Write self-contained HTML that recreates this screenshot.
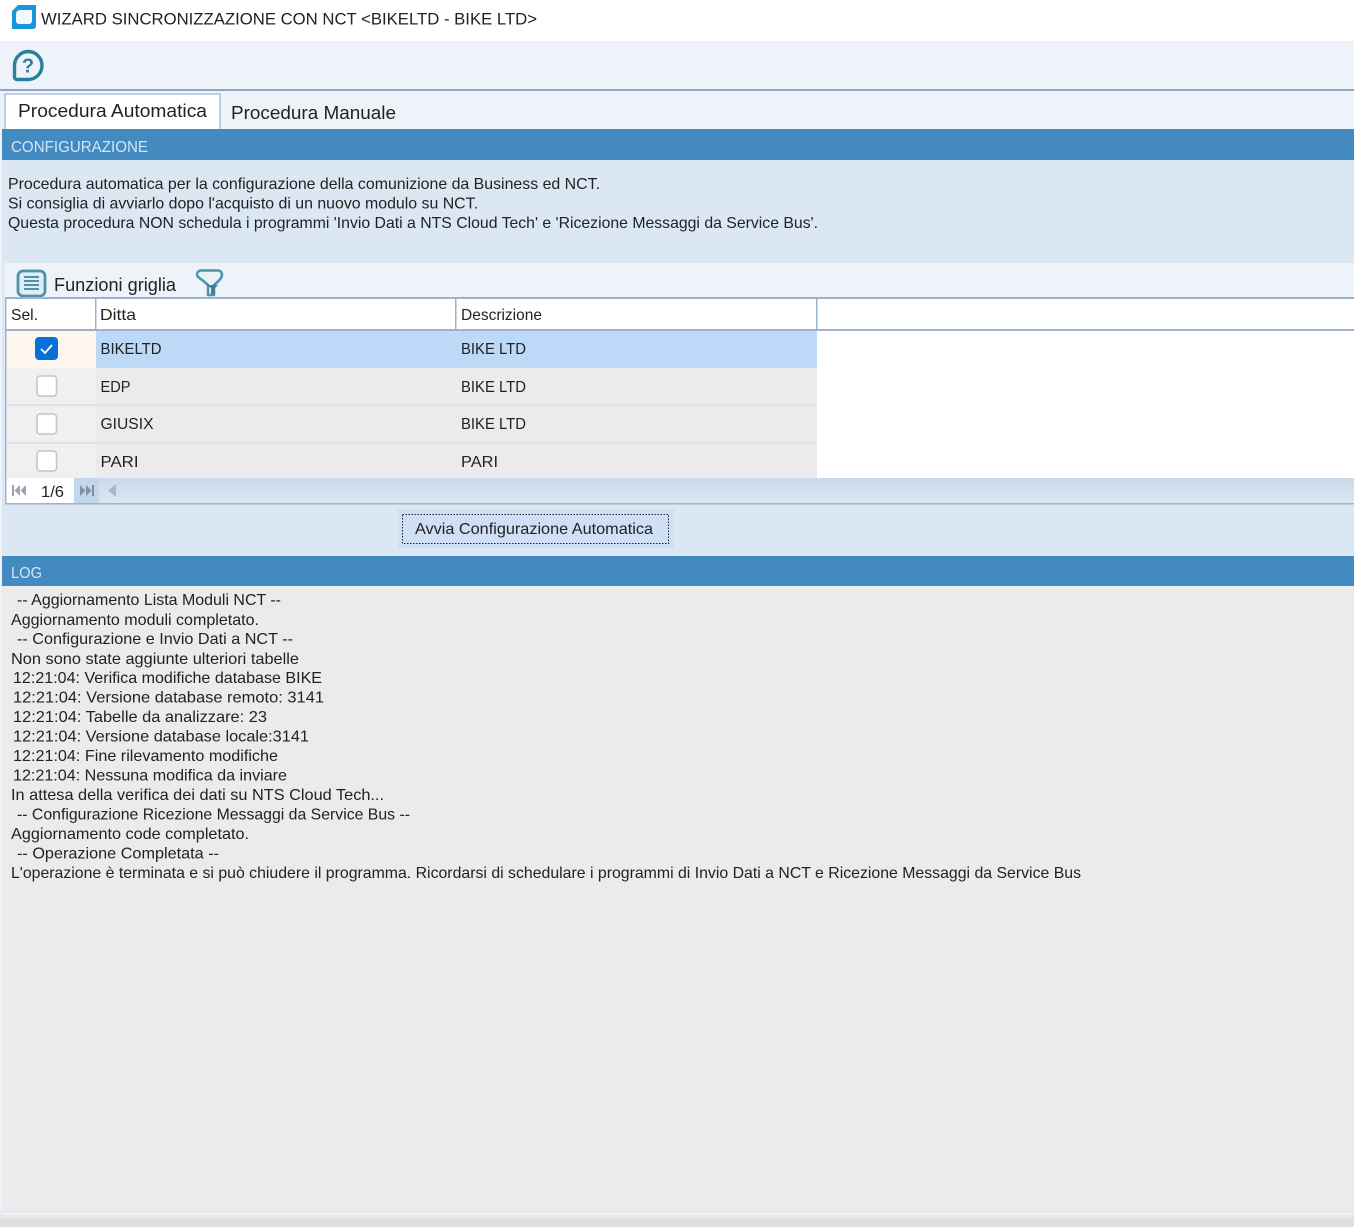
<!DOCTYPE html>
<html><head><meta charset="utf-8"><title>Wizard</title>
<style>
html,body{margin:0;padding:0;background:#fff;width:1354px;height:1227px;overflow:hidden}
svg{display:block;position:absolute;left:0;top:0}
text{font-family:"Liberation Sans",sans-serif;font-size:16px;fill:#222;white-space:pre}
.w{fill:#d5e4f2}
</style></head><body>
<svg width="1354" height="1227" viewBox="0 0 1354 1227" xmlns="http://www.w3.org/2000/svg">
<defs>
<linearGradient id="bar" x1="0" y1="0" x2="0" y2="1"><stop offset="0" stop-color="#c9d9ea"/><stop offset="1" stop-color="#dce7f2"/></linearGradient>
</defs>
<rect width="1354" height="1227" fill="#fff"/>
<!-- title -->
<path d="M18 5h18v21a3 3 0 0 1-3 3H12V11z" fill="#1b95dc"/>
<path d="M20 10h11a1 1 0 0 1 1 1v10a3 3 0 0 1-3 3H19a3 3 0 0 1-3-3V14a4 4 0 0 1 4-4z" fill="#f0f8fd"/>
<text x="41" y="24.500" textLength="496" lengthAdjust="spacingAndGlyphs" style="font-size:17px;fill:#222">WIZARD SINCRONIZZAZIONE CON NCT &lt;BIKELTD - BIKE LTD&gt;</text>
<!-- toolbar -->
<rect y="41" width="1354" height="48" fill="#eef2f9"/>
<rect y="89" width="1354" height="2" fill="#8ea6c4"/>
<path d="M28 51.500a14 14 0 0 1 0 28H17a2.500 2.500 0 0 1-2.500-2.500V65.500a14 14 0 0 1 13.500-14z" fill="none" stroke="#2a7f9f" stroke-width="3.400"/>
<text x="28" y="72.500" text-anchor="middle" style="font-size:20px;font-weight:bold;fill:#2a7f9f">?</text>
<!-- tabs -->
<rect y="91" width="1354" height="38" fill="#eef2f9"/>
<rect x="5" y="94" width="215" height="36" fill="#fff" stroke="#8ea6c4" stroke-width="1"/>
<text x="18" y="117" textLength="189" lengthAdjust="spacingAndGlyphs" style="font-size:18px">Procedura Automatica</text>
<text x="231" y="119" textLength="165" lengthAdjust="spacingAndGlyphs" style="font-size:18px">Procedura Manuale</text>
<!-- main bg -->
<rect x="2" y="129" width="1352" height="1088" fill="#dbe8f3"/>
<rect x="0" y="129" width="2" height="1088" fill="#eef2f9"/>
<rect x="2" y="129" width="1352" height="31" fill="#438ac1"/>
<text class="w" x="11" y="152" textLength="137" lengthAdjust="spacingAndGlyphs">CONFIGURAZIONE</text>
<text x="8" y="189" textLength="592" lengthAdjust="spacingAndGlyphs">Procedura automatica per la configurazione della comunizione da Business ed NCT.</text>
<text x="8" y="208.500" textLength="470" lengthAdjust="spacingAndGlyphs">Si consiglia di avviarlo dopo l'acquisto di un nuovo modulo su NCT.</text>
<text x="8" y="228" textLength="810" lengthAdjust="spacingAndGlyphs">Questa procedura NON schedula i programmi 'Invio Dati a NTS Cloud Tech' e 'Ricezione Messaggi da Service Bus'.</text>
<!-- grid toolbar -->
<rect x="4" y="263" width="1350" height="34" fill="#eef2f9"/>
<rect x="18" y="271" width="27" height="25" rx="5" fill="#e1edf6" stroke="#4d93ab" stroke-width="2.800"/>
<path d="M24 277h15M24 281h15M24 285h15M24 289h15" stroke="#4d93ab" stroke-width="2"/>
<text x="54" y="291" textLength="122" lengthAdjust="spacingAndGlyphs" style="font-size:18px">Funzioni griglia</text>
<path d="M201 270.500h17a4 4 0 0 1 4 4c0 3-2 5-4 7l-4 3.500v10h-6v-10l-4-3.500c-2-2-7-4-7-7a4 4 0 0 1 4-4z" fill="#eaf2f8" stroke="#4d93ab" stroke-width="2.500" stroke-linejoin="round"/>
<path d="M207 285h11l-3 3v6h-4v-6z" fill="#3f7f99"/>
<!-- grid -->
<rect x="5" y="297" width="1349" height="207" fill="#fff"/>
<rect x="5" y="297" width="1349" height="2" fill="#9db2cc"/>
<rect x="5" y="329" width="1349" height="2" fill="#9db2cc"/>
<rect x="5" y="297" width="1.500" height="207" fill="#9db2cc"/>
<rect x="95" y="298" width="1.500" height="32" fill="#9db2cc"/>
<rect x="455" y="298" width="1.500" height="32" fill="#9db2cc"/>
<rect x="816" y="298" width="1.500" height="32" fill="#9db2cc"/>
<text x="11" y="320" textLength="27" lengthAdjust="spacingAndGlyphs">Sel.</text>
<text x="100" y="320" textLength="36" lengthAdjust="spacingAndGlyphs">Ditta</text>
<text x="461" y="320" textLength="81" lengthAdjust="spacingAndGlyphs">Descrizione</text>
<!-- rows -->
<rect x="7" y="331" width="89" height="37" fill="#fdf6ec"/>
<rect x="96" y="331" width="721" height="37" fill="#bcd9f7"/>
<rect x="7" y="368" width="810" height="37" fill="#ebebeb"/>
<rect x="7" y="404.500" width="810" height="1.500" fill="#d5e0ee"/>
<rect x="7" y="406" width="810" height="36" fill="#ebebeb"/>
<rect x="7" y="442" width="810" height="1.500" fill="#d5e0ee"/>
<rect x="7" y="443.500" width="810" height="34.500" fill="#ebebeb"/>
<rect x="7" y="368" width="89" height="36.500" fill="#f0f0f0"/>
<rect x="7" y="406" width="89" height="36" fill="#f0f0f0"/>
<rect x="7" y="443.500" width="89" height="34.500" fill="#f0f0f0"/>
<rect x="35" y="337" width="23" height="23" rx="4" fill="#0a6fd6"/>
<path d="M41 349l4 4 7-8" fill="none" stroke="#fff" stroke-width="1.800"/>
<rect x="37" y="376" width="19.500" height="20" rx="3" fill="#fff" stroke="#c4c4c4" stroke-width="1.500"/>
<rect x="37" y="414" width="19.500" height="20" rx="3" fill="#fff" stroke="#c4c4c4" stroke-width="1.500"/>
<rect x="37" y="451" width="19.500" height="20" rx="3" fill="#fff" stroke="#c4c4c4" stroke-width="1.500"/>
<text x="100.500" y="354" textLength="61" lengthAdjust="spacingAndGlyphs">BIKELTD</text>
<text x="461" y="354" textLength="65" lengthAdjust="spacingAndGlyphs">BIKE LTD</text>
<text x="100.500" y="392" textLength="30" lengthAdjust="spacingAndGlyphs">EDP</text>
<text x="461" y="392" textLength="65" lengthAdjust="spacingAndGlyphs">BIKE LTD</text>
<text x="100.500" y="429" textLength="53" lengthAdjust="spacingAndGlyphs">GIUSIX</text>
<text x="461" y="429" textLength="65" lengthAdjust="spacingAndGlyphs">BIKE LTD</text>
<text x="100.500" y="467" textLength="38" lengthAdjust="spacingAndGlyphs">PARI</text>
<text x="461" y="467" textLength="37" lengthAdjust="spacingAndGlyphs">PARI</text>
<!-- nav bar -->
<rect x="7" y="478" width="1347" height="25" fill="url(#bar)"/>
<rect x="7" y="478" width="67" height="25" fill="#fff"/>
<rect x="74" y="478" width="25" height="25" fill="#c3d6ec"/>
<rect x="5" y="503" width="1349" height="1.500" fill="#9db2cc"/>
<path d="M12 485h2v11h-2zM20 485v11l-5.500-5.500zM26 485v11l-5.500-5.500z" fill="#9aa5b0"/>
<text x="41" y="497" textLength="23" lengthAdjust="spacingAndGlyphs">1/6</text>
<path d="M92 485h2v11h-2zM80 485v11l5.500-5.500zM86 485v11l5.500-5.500z" fill="#7f8fa5"/>
<path d="M116 484v13l-8-6.500z" fill="#a9b8c8"/>
<!-- button -->
<rect x="398" y="509" width="276" height="39" fill="#cfe0f6"/>
<rect x="402.500" y="514.500" width="266" height="29" fill="none" stroke="#222" stroke-width="1" stroke-dasharray="1.500 1.500"/>
<text x="415" y="534" textLength="238" lengthAdjust="spacingAndGlyphs">Avvia Configurazione Automatica</text>
<!-- log -->
<rect x="2" y="556" width="1352" height="30" fill="#438ac1"/>
<text class="w" x="11" y="578" textLength="31" lengthAdjust="spacingAndGlyphs">LOG</text>
<rect x="2" y="586" width="1352" height="627" fill="#ebebeb"/>
<text x="17" y="605" textLength="264" lengthAdjust="spacingAndGlyphs">-- Aggiornamento Lista Moduli NCT --</text>
<text x="11" y="625" textLength="248" lengthAdjust="spacingAndGlyphs">Aggiornamento moduli completato.</text>
<text x="17" y="644" textLength="276" lengthAdjust="spacingAndGlyphs">-- Configurazione e Invio Dati a NCT --</text>
<text x="11" y="664" textLength="288" lengthAdjust="spacingAndGlyphs">Non sono state aggiunte ulteriori tabelle</text>
<text x="13" y="683" textLength="309" lengthAdjust="spacingAndGlyphs">12:21:04: Verifica modifiche database BIKE</text>
<text x="13" y="702.500" textLength="311" lengthAdjust="spacingAndGlyphs">12:21:04: Versione database remoto: 3141</text>
<text x="13" y="722" textLength="254" lengthAdjust="spacingAndGlyphs">12:21:04: Tabelle da analizzare: 23</text>
<text x="13" y="741.500" textLength="296" lengthAdjust="spacingAndGlyphs">12:21:04: Versione database locale:3141</text>
<text x="13" y="761" textLength="265" lengthAdjust="spacingAndGlyphs">12:21:04: Fine rilevamento modifiche</text>
<text x="13" y="780.500" textLength="274" lengthAdjust="spacingAndGlyphs">12:21:04: Nessuna modifica da inviare</text>
<text x="11" y="800" textLength="373" lengthAdjust="spacingAndGlyphs">In attesa della verifica dei dati su NTS Cloud Tech...</text>
<text x="17" y="819.500" textLength="393" lengthAdjust="spacingAndGlyphs">-- Configurazione Ricezione Messaggi da Service Bus --</text>
<text x="11" y="839" textLength="238" lengthAdjust="spacingAndGlyphs">Aggiornamento code completato.</text>
<text x="17" y="858.500" textLength="202" lengthAdjust="spacingAndGlyphs">-- Operazione Completata --</text>
<text x="11" y="878" textLength="1070" lengthAdjust="spacingAndGlyphs">L'operazione è terminata e si può chiudere il programma. Ricordarsi di schedulare i programmi di Invio Dati a NCT e Ricezione Messaggi da Service Bus</text>
<!-- bottom -->
<rect x="0" y="1211" width="1354" height="2" fill="#e2e9f0"/>
<rect x="0" y="1213" width="1354" height="2" fill="#f1f4f9"/>
<rect x="0" y="1215" width="1354" height="4" fill="#e2e6ec"/>
<rect x="0" y="1219" width="1354" height="8" fill="#dedede"/>
</svg>
</body></html>
